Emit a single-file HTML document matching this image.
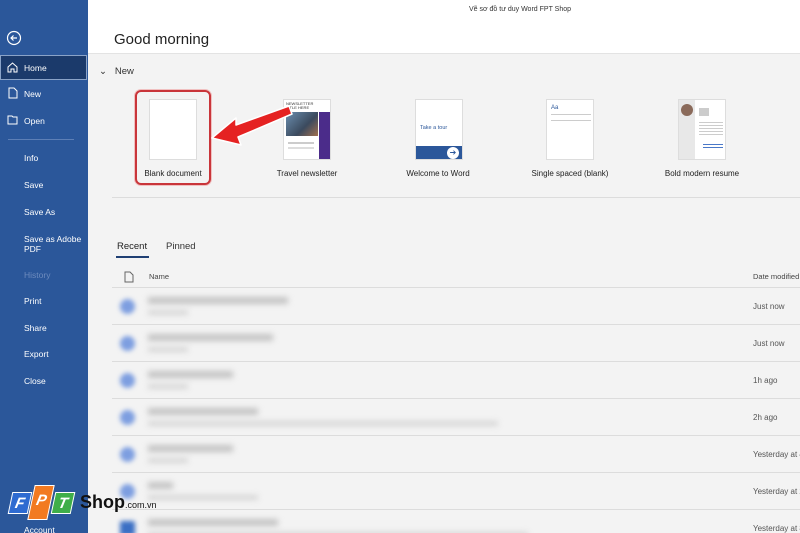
<!DOCTYPE html>
<html style="width:800px;height:533px;overflow:hidden"><head><meta charset="utf-8"><style>
*{margin:0;padding:0;box-sizing:border-box}
body{width:800px;height:533px;overflow:hidden;font-family:"Liberation Sans","Noto Sans CJK SC",sans-serif;background:#f3f3f3;position:relative}
.side{position:absolute;left:0;top:0;width:88px;height:533px;background:#2b579a;color:#fff;font-size:8.5px;overflow:hidden}
.side div{position:absolute;left:24px}
.hdr{position:absolute;left:88px;top:0;width:712px;height:54px;background:#fff;border-bottom:1px solid #e3e3e3}
.t{position:absolute;white-space:nowrap}
.thumb{position:absolute;top:99px;width:48px;height:61px;background:#fff;border:1px solid #ddd}
.lbl{position:absolute;top:169px;font-size:8px;color:#222;white-space:nowrap;transform:translateX(-50%)}
.row{position:absolute;left:112px;width:688px;height:37px;border-top:1px solid #dcdcdc;overflow:hidden}
.row .ic{position:absolute;left:8px;top:11px;width:15px;height:15px;border-radius:50%;background:#7d9ee0;filter:blur(2.5px)}
.row .n{position:absolute;left:36px;top:9px;height:7px;background:#c4c4c4;filter:blur(3px)}
.row .s{position:absolute;left:36px;top:22px;height:5px;background:#d6d6d6;filter:blur(3px)}
.row .d{position:absolute;left:641px;top:14px;font-size:8px;color:#555;white-space:nowrap}
</style></head><body>
<div class="side">
<svg style="position:absolute;left:6px;top:30px" width="16" height="16" viewBox="0 0 16 16"><circle cx="8" cy="8" r="6.5" fill="none" stroke="#fff" stroke-width="1.2"/><path d="M11 8H5M7.5 5.5L5 8l2.5 2.5" fill="none" stroke="#fff" stroke-width="1.2"/></svg>
<div style="left:0;top:55px;width:87px;height:25px;background:#1b3a6b;border:1px solid #8aa3c8"></div>
<svg style="position:absolute;left:7px;top:62px" width="11" height="11" viewBox="0 0 11 11"><path d="M1 5L5.5 1 10 5V10H7V7H4v3H1z" fill="none" stroke="#fff"/></svg>
<div style="top:63px">Home</div>
<svg style="position:absolute;left:8px;top:87px" width="10" height="12" viewBox="0 0 10 12"><path d="M1 1h5l3 3v7H1z" fill="none" stroke="#fff"/></svg>
<div style="top:89px">New</div>
<svg style="position:absolute;left:7px;top:115px" width="12" height="10" viewBox="0 0 12 10"><path d="M1 1h4l1 1h4v7H1z" fill="none" stroke="#fff"/></svg>
<div style="top:116px">Open</div>
<div style="left:8px;top:139px;width:66px;height:1px;background:#5d7fb6"></div>
<div style="top:153px">Info</div>
<div style="top:180px">Save</div>
<div style="top:207px">Save As</div>
<div style="top:234px;line-height:10px">Save as Adobe<br>PDF</div>
<div style="top:270px;color:#6d8bbd">History</div>
<div style="top:296px">Print</div>
<div style="top:323px">Share</div>
<div style="top:349px">Export</div>
<div style="top:376px">Close</div>
<div style="top:525px">Account</div>
</div>
<div class="hdr"></div>
<div class="t" style="left:469px;top:6px;font-size:7px;color:#333">Vẽ sơ đồ tư duy Word FPT Shop</div>
<div class="t" style="left:114px;top:31px;font-size:15px;color:#222">Good morning</div>
<div class="t" style="left:99px;top:66px;font-size:9.5px;color:#333">⌄&nbsp;&nbsp; New</div>
<div style="position:absolute;left:112px;top:197px;width:688px;height:1px;background:#dcdcdc"></div>
<div style="position:absolute;left:135px;top:90px;width:76px;height:95px;border:2px solid #c9353a;border-radius:6px;box-shadow:0 0 0 1px #f0c0c0"></div>
<div class="thumb" style="left:149px"></div>
<div class="lbl" style="left:173px">Blank document</div>
<div class="thumb" style="left:283px;overflow:hidden">
<div style="position:absolute;left:2px;top:2px;width:34px;height:8px;font-size:4px;line-height:4px;color:#333">NEWSLETTER<br>TITLE HERE</div>
<div style="position:absolute;left:2px;top:12px;width:32px;height:24px;background:linear-gradient(135deg,#6b8fb0,#3b4a5e 60%,#a07050)"></div>
<div style="position:absolute;left:35px;top:12px;width:12px;height:47px;background:#4b2c8a"></div>
<div style="position:absolute;left:4px;top:42px;width:26px;height:2px;background:#ccc"></div>
<div style="position:absolute;left:4px;top:47px;width:26px;height:2px;background:#ddd"></div>
</div>
<div class="lbl" style="left:307px">Travel newsletter</div>
<div class="thumb" style="left:415px;overflow:hidden">
<div style="position:absolute;left:4px;top:25px;font-size:5.5px;color:#2b579a">Take a tour</div>
<div style="position:absolute;left:0;top:46px;width:48px;height:14px;background:#2b579a"></div>
<div style="position:absolute;left:31px;top:47px;width:12px;height:12px;border-radius:50%;background:#fff;font-size:8px;line-height:12px;text-align:center;color:#2b579a">➔</div>
</div>
<div class="lbl" style="left:438px">Welcome to Word</div>
<div class="thumb" style="left:546px">
<div style="position:absolute;left:4px;top:5px;font-size:6px;color:#2b579a">Aa</div>
<div style="position:absolute;left:4px;top:14px;width:40px;height:1px;background:#ccc"></div>
<div style="position:absolute;left:4px;top:20px;width:40px;height:1px;background:#ccc"></div>
</div>
<div class="lbl" style="left:570px">Single spaced (blank)</div>
<div class="thumb" style="left:678px;overflow:hidden">
<div style="position:absolute;left:0;top:0;width:16px;height:61px;background:#e8e8e8"></div>
<div style="position:absolute;left:2px;top:4px;width:12px;height:12px;border-radius:50%;background:#8a6a5a"></div>
<div style="position:absolute;left:20px;top:8px;width:10px;height:8px;background:#ccc"></div>
<div style="position:absolute;left:20px;top:22px;width:24px;height:14px;background:repeating-linear-gradient(#ccc 0 1px,transparent 1px 3px)"></div>
<div style="position:absolute;left:24px;top:44px;width:20px;height:6px;background:repeating-linear-gradient(#4a78c8 0 1px,transparent 1px 3px)"></div>
</div>
<div class="lbl" style="left:702px">Bold modern resume</div>
<svg style="position:absolute;left:205px;top:100px" width="90" height="50" viewBox="0 0 90 50"><path d="M84 6L31 25 31 18 7 38 36 45 33 37 87 14z" fill="#e52222" stroke="#fff" stroke-width="1.5" stroke-linejoin="round"/></svg>
<div class="t" style="left:117px;top:241px;font-size:9.5px;color:#222">Recent</div>
<div style="position:absolute;left:116px;top:256px;width:33px;height:2px;background:#1f3f73"></div>
<div class="t" style="left:166px;top:241px;font-size:9.5px;color:#333">Pinned</div>
<svg style="position:absolute;left:124px;top:271px" width="10" height="12" viewBox="0 0 10 12"><path d="M1 1h5l3 3v7H1z" fill="none" stroke="#666"/></svg>
<div class="t" style="left:149px;top:272px;font-size:7.5px;color:#444">Name</div>
<div class="t" style="left:753px;top:272px;font-size:7.5px;color:#444">Date modified</div>
<div class="row" style="top:287px"><div class="ic"></div><div class="n" style="width:140px"></div><div class="s" style="width:40px"></div><div class="d">Just now</div></div>
<div class="row" style="top:324px"><div class="ic"></div><div class="n" style="width:125px"></div><div class="s" style="width:40px"></div><div class="d">Just now</div></div>
<div class="row" style="top:361px"><div class="ic"></div><div class="n" style="width:85px"></div><div class="s" style="width:40px"></div><div class="d">1h ago</div></div>
<div class="row" style="top:398px"><div class="ic"></div><div class="n" style="width:110px"></div><div class="s" style="width:350px"></div><div class="d">2h ago</div></div>
<div class="row" style="top:435px"><div class="ic"></div><div class="n" style="width:85px"></div><div class="s" style="width:40px"></div><div class="d">Yesterday at 4</div></div>
<div class="row" style="top:472px"><div class="ic"></div><div class="n" style="width:25px"></div><div class="s" style="width:110px"></div><div class="d">Yesterday at 2</div></div>
<div class="row" style="top:509px;height:24px"><div class="ic" style="border-radius:2px;background:#3b6fc4"></div><div class="n" style="width:130px"></div><div class="s" style="width:380px"></div><div class="d">Yesterday at 8</div></div>
<div style="position:absolute;left:10px;top:492px;width:20px;height:22px;background:#2e6bd1;transform:skewX(-12deg);color:#fff;font:bold italic 15px 'Liberation Sans';text-align:center;line-height:22px;border:1px solid #fff">F</div>
<div style="position:absolute;left:31px;top:485px;width:20px;height:35px;background:#f27a21;transform:skewX(-12deg);color:#fff;font:bold italic 15px 'Liberation Sans';text-align:center;line-height:30px;border:1px solid #fff">P</div>
<div style="position:absolute;left:53px;top:492px;width:20px;height:22px;background:#3fae49;transform:skewX(-12deg);color:#fff;font:bold italic 15px 'Liberation Sans';text-align:center;line-height:22px;border:1px solid #fff">T</div>
<div class="t" style="left:80px;top:492px;font:bold 18px 'Liberation Sans';color:#111">Shop<span style="font-size:9px;font-weight:normal">.com.vn</span></div>
</body></html>
